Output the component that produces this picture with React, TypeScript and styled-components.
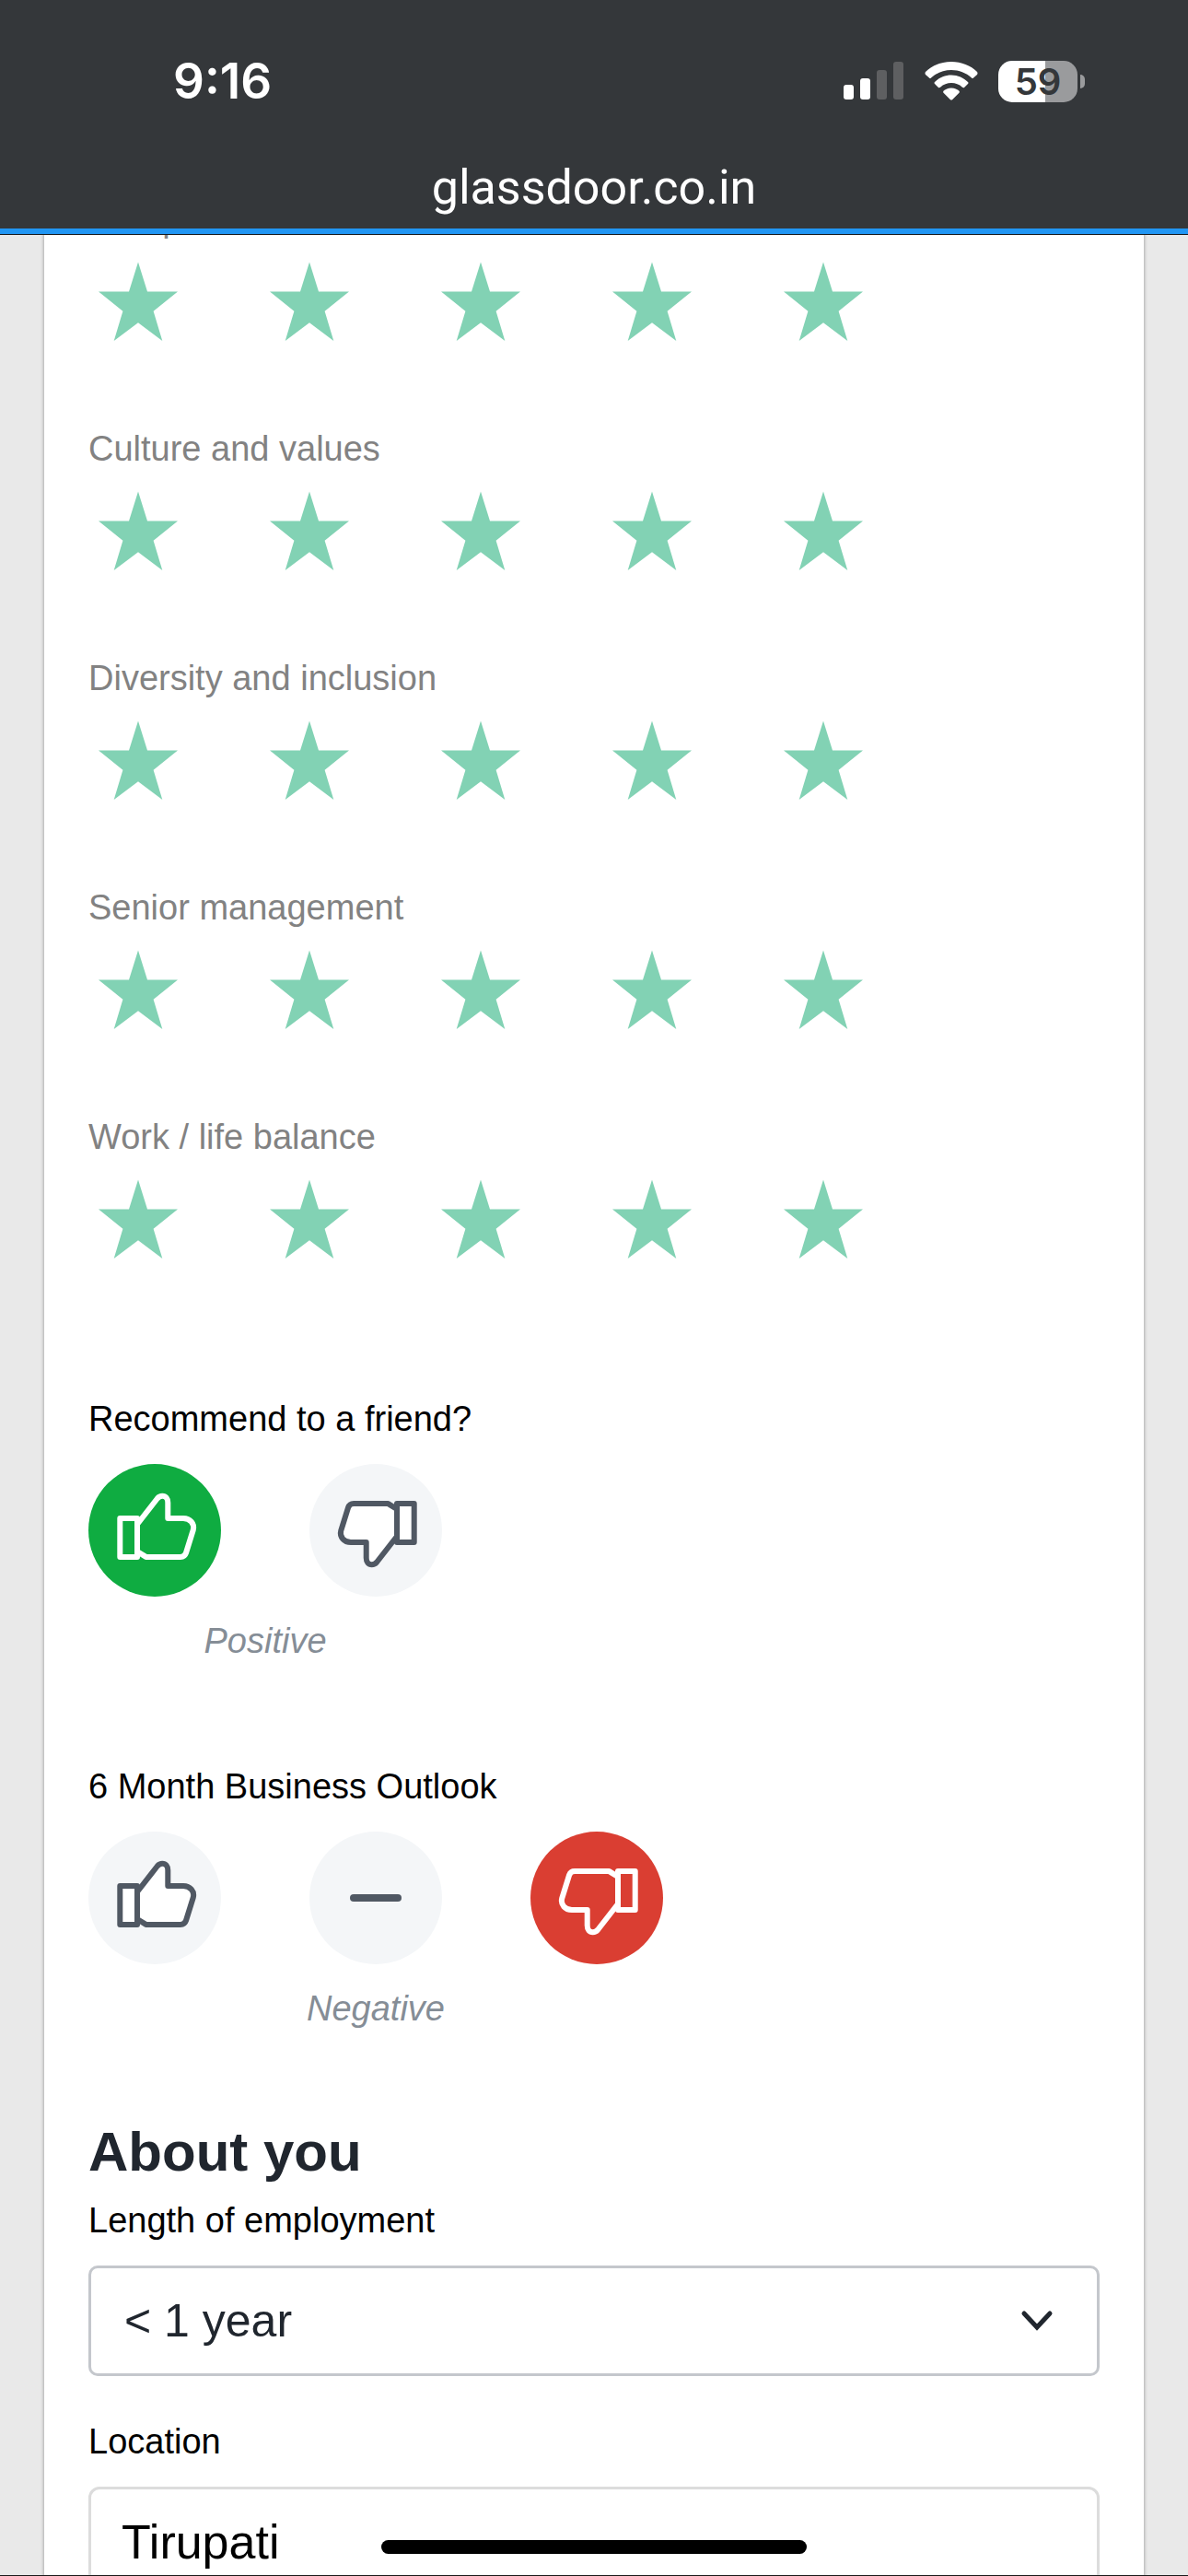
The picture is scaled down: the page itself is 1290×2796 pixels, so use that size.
import React from "react";
import styled, { createGlobalStyle } from "styled-components";

const sans = '"Liberation Sans", Arial, sans-serif';
const system = 'Inter, "Liberation Sans", sans-serif';

const GlobalStyle = createGlobalStyle`
  *, *::before, *::after { box-sizing: border-box; }
  body { margin: 0; background: #e9e9e9; font-family: ${sans}; }
`;

const Screen = styled.div`
  display: flex;
  flex-direction: column;
  height: 100vh;
  overflow: hidden;
  border-bottom: 1px solid #1b1b1b;
`;

const Header = styled.header`
  flex: none;
  background: #34373a;
  color: #fff;
  font-family: ${system};
  border-bottom: 1px solid #16191c;
`;

const StatusBar = styled.div`
  display: flex;
  align-items: center;
  justify-content: space-between;
  padding: 56px 112px 0 188px;
  height: 120px;
`;

const Clock = styled.time`
  font-size: 53px;
  line-height: 64px;
  font-weight: 600;
`;

const StatusIcons = styled.div`
  display: flex;
  align-items: center;
  gap: 22px;
`;

const Battery = styled.div`
  display: flex;
  align-items: center;
  gap: 3px;
`;

const BatteryBody = styled.div<{ $level: number }>`
  width: 86px;
  height: 45px;
  border-radius: 15px;
  background: linear-gradient(
    to right,
    #fff ${(p) => p.$level}%,
    #9a9b9d ${(p) => p.$level}%
  );
  color: #34373a;
  font-size: 40px;
  line-height: 45px;
  font-weight: 600;
  text-align: center;
`;

const BatteryTip = styled.div`
  width: 5px;
  height: 15px;
  border-radius: 0 5px 5px 0;
  background: #9a9b9d;
`;

const Address = styled.div`
  padding: 52px 0 12px;
  height: 128px;
  font-family: Roboto, ${system};
  font-size: 52px;
  line-height: 64px;
  text-align: center;
`;

const Progress = styled.div`
  height: 6px;
  background: #2196f3;
`;

const Viewport = styled.main`
  flex: 1;
  min-height: 0;
  overflow: hidden;
  padding: 0 48px;
`;

const Card = styled.form`
  margin-top: -65px;
  padding: 24px 48px 48px;
  background: #fff;
  box-shadow: 0 0 4px rgba(0, 0, 0, 0.4);
`;

const Ratings = styled.div`
  display: flex;
  flex-direction: column;
  gap: 81px;
  margin-bottom: 138px;
`;

const Group = styled.fieldset`
  border: 0;
  margin: 0;
  padding: 0;
  min-width: 0;
`;

const Legend = styled.legend<{ $muted?: boolean }>`
  padding: 0;
  font-size: 38px;
  line-height: 48px;
  color: ${(p) => (p.$muted ? "#828282" : "#000")};
`;

const Stars = styled.div`
  display: flex;
  gap: 78px;
`;

const StarChoice = styled.label`
  display: grid;
  width: 108px;
  height: 120px;
  > * { grid-area: 1 / 1; }
`;

const StarInput = styled.input`
  appearance: none;
  margin: 0;
`;

const Questions = styled.div`
  display: flex;
  flex-direction: column;
  gap: 110px;
`;

const Answer = styled.div`
  display: inline-flex;
  flex-direction: column;
  gap: 24px;
  padding-top: 25px;
`;

const Choices = styled.div`
  display: flex;
  gap: 96px;
`;

const Round = styled.button<{ $active?: string }>`
  width: 144px;
  height: 144px;
  padding: 0;
  border: 0;
  border-radius: 50%;
  background: ${(p) => p.$active || "#f4f6f8"};
  color: ${(p) => (p.$active ? "#fff" : "#505863")};
  svg { display: block; fill: ${(p) => (p.$active ? "none" : "#fff")}; }
`;

const Caption = styled.output`
  font-size: 38px;
  line-height: 48px;
  font-style: italic;
  text-align: center;
  color: #858d96;
`;

const Heading = styled.h2`
  margin: 96px 0 14px;
  font-size: 60px;
  line-height: 72px;
  font-weight: 700;
  color: #20262e;
`;

const Fields = styled.div`
  display: flex;
  flex-direction: column;
  gap: 47px;
`;

const Field = styled.div`
  display: flex;
  flex-direction: column;
  gap: 25px;
`;

const FieldLabel = styled.label`
  font-size: 38px;
  line-height: 48px;
  color: #000;
`;

const SelectBox = styled.div`
  display: grid;
  align-items: center;
  > * { grid-area: 1 / 1; }
  svg { justify-self: end; margin-right: 48px; pointer-events: none; }
`;

const Select = styled.select`
  appearance: none;
  width: 100%;
  height: 120px;
  padding: 0 96px 0 36px;
  border: 3px solid #c4c7cc;
  border-radius: 10px;
  background: #fff;
  color: #20262e;
  font: 50px ${sans};
`;

const TextInput = styled.input`
  width: 100%;
  height: 120px;
  padding: 0 33px;
  border: 3px solid #dcdcdc;
  border-radius: 12px;
  background: #fff;
  color: #000;
  font: 52px ${sans};
`;

const HomeIndicator = styled.div`
  position: fixed;
  left: 50%;
  bottom: 24px;
  width: 462px;
  height: 15px;
  margin-left: -231px;
  border-radius: 8px;
  background: #000;
`;

const SignalIcon = () => (
  <svg width="66" height="42" viewBox="0 0 66 42" aria-hidden="true">
    <rect x="0" y="25" width="11" height="16" rx="3" fill="#fff" />
    <rect x="18" y="18" width="11" height="23" rx="3" fill="#fff" />
    <rect x="36" y="9" width="11" height="32" rx="3" fill="#5e5f61" />
    <rect x="54" y="0" width="11" height="41" rx="3" fill="#5e5f61" />
  </svg>
);

const WifiIcon = () => (
  <svg width="58" height="42" viewBox="0 0 58 42" aria-hidden="true" fill="#fff">
    <path d="M29 0C40 0 50 4 57 11Q58 12.500 57 14L53 17.500Q52 18.500 51 17.500C45 12 37.500 9 29 9S13 12 7 17.500Q6 18.500 5 17.500L1 14Q0 12.500 1 11C8 4 18 0 29 0Z" />
    <path d="M29 14.500C36 14.500 42.500 17.500 47 22Q48 23 47 24L43 28Q42 28.500 41 27.700C37.500 24.500 33.500 23 29 23S20.500 24.500 17 27.700Q16 28.500 15 28L11 24Q10 23 11 22C15.500 17.500 22 14.500 29 14.500Z" />
    <path d="M29 28.500C32.500 28.500 35.500 29.800 37.500 31.800Q38.300 32.800 37.500 33.800L30 41.200Q29 42 28 41.200L20.500 33.800Q19.700 32.800 20.500 31.800C22.500 29.800 25.500 28.500 29 28.500Z" />
  </svg>
);

const StarIcon = () => (
  <svg width="108" height="120" viewBox="0 0 108 120" aria-hidden="true">
    <path
      fill="#82d2b4"
      d="M54 22.500 64 54.500H97L70.600 75.700 80.300 108 54 88.200 27.700 108 37.400 75.700 11 54.500H44Z"
    />
  </svg>
);

const ThumbIcon = ({ down }: { down?: boolean }) => (
  <svg width="144" height="144" viewBox="0 0 144 144" aria-hidden="true">
    <g
      transform={down ? "rotate(180 74 72)" : undefined}
      stroke="currentColor"
      strokeWidth="6"
      strokeLinejoin="round"
    >
      <path d="M53 65.500 74.800 37.500C76.500 35.500 78.300 34.800 80.300 34.800C84 34.800 86.300 37.500 86.300 42V59H103C110.500 59 115.500 65 113.800 71.500L106 96.500C105 99.500 103.300 100.900 100 100.900H62.500L53 95Z" />
      <path d="M34.300 59H53V100.900H34.300Z" />
    </g>
  </svg>
);

const MinusIcon = () => (
  <svg width="144" height="144" viewBox="0 0 144 144" aria-hidden="true">
    <path d="M48 72H96" stroke="currentColor" strokeWidth="8" strokeLinecap="round" />
  </svg>
);

const ChevronIcon = () => (
  <svg width="40" height="28" viewBox="0 0 40 28" aria-hidden="true">
    <path
      d="M6 6 20 21 34 6"
      fill="none"
      stroke="#20262e"
      strokeWidth="5"
      strokeLinecap="round"
    />
  </svg>
);

const categories = [
  "Compensation and benefits",
  "Culture and values",
  "Diversity and inclusion",
  "Senior management",
  "Work / life balance",
];

const Rating = ({ title }: { title: string }) => (
  <Group>
    <Legend $muted>{title}</Legend>
    <Stars>
      {[1, 2, 3, 4, 5].map((n) => (
        <StarChoice key={n}>
          <StarInput type="radio" name={title} value={n} aria-label={`${n} out of 5`} />
          <StarIcon />
        </StarChoice>
      ))}
    </Stars>
  </Group>
);

export default function App() {
  return (
    <>
      <GlobalStyle />
      <Screen>
        <Header>
          <StatusBar>
            <Clock>9:16</Clock>
            <StatusIcons>
              <SignalIcon />
              <WifiIcon />
              <Battery>
                <BatteryBody $level={59}>59</BatteryBody>
                <BatteryTip />
              </Battery>
            </StatusIcons>
          </StatusBar>
          <Address>glassdoor.co.in</Address>
          <Progress />
        </Header>
        <Viewport>
          <Card>
            <Ratings>
              {categories.map((title) => (
                <Rating key={title} title={title} />
              ))}
            </Ratings>
            <Questions>
              <Group>
                <Legend>Recommend to a friend?</Legend>
                <Answer>
                  <Choices>
                    <Round type="button" aria-label="Yes" aria-pressed $active="#0fac41">
                      <ThumbIcon />
                    </Round>
                    <Round type="button" aria-label="No" aria-pressed={false}>
                      <ThumbIcon down />
                    </Round>
                  </Choices>
                  <Caption>Positive</Caption>
                </Answer>
              </Group>
              <Group>
                <Legend>6 Month Business Outlook</Legend>
                <Answer>
                  <Choices>
                    <Round type="button" aria-label="Better" aria-pressed={false}>
                      <ThumbIcon />
                    </Round>
                    <Round type="button" aria-label="Same" aria-pressed={false}>
                      <MinusIcon />
                    </Round>
                    <Round type="button" aria-label="Worse" aria-pressed $active="#da3e32">
                      <ThumbIcon down />
                    </Round>
                  </Choices>
                  <Caption>Negative</Caption>
                </Answer>
              </Group>
            </Questions>
            <Heading>About you</Heading>
            <Fields>
              <Field>
                <FieldLabel htmlFor="tenure">Length of employment</FieldLabel>
                <SelectBox>
                  <Select id="tenure">
                    <option>&lt; 1 year</option>
                  </Select>
                  <ChevronIcon />
                </SelectBox>
              </Field>
              <Field>
                <FieldLabel htmlFor="location">Location</FieldLabel>
                <TextInput id="location" type="text" defaultValue="Tirupati" />
              </Field>
            </Fields>
          </Card>
        </Viewport>
      </Screen>
      <HomeIndicator />
    </>
  );
}
